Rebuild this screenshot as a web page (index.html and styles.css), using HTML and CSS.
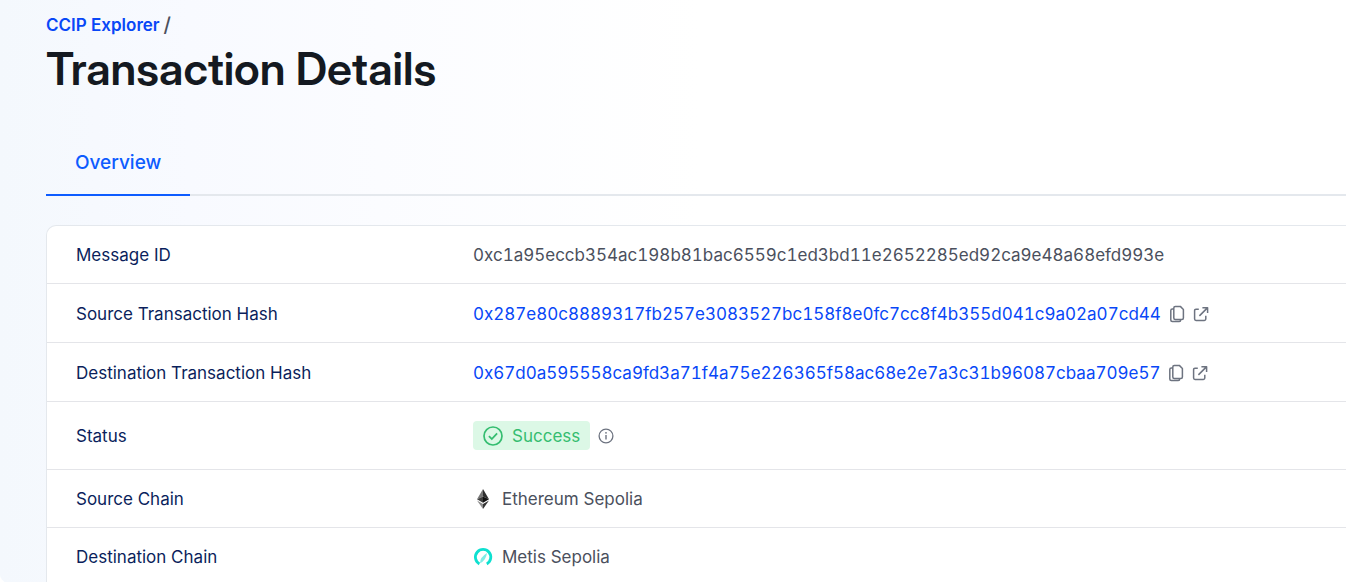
FILE: index.html
```
<!DOCTYPE html>
<html lang="en">
<head>
<meta charset="utf-8">
<meta name="viewport" content="width=device-width, initial-scale=1">
<title>Transaction Details</title>
<link rel="stylesheet" href="styles.css">
</head>
<body>
<svg class="sprite" aria-hidden="true">
  <symbol id="copy" viewBox="0 0 16 18">
    <path d="M4.8 2.9Q4.8 1.4 6.3 1.4H11.3L14.4 4.5V13.1Q14.4 14.6 12.9 14.6H6.3Q4.8 14.6 4.8 13.1Z M4.6 3.9H3.3Q1.8 3.9 1.8 5.4V15.1Q1.8 16.6 3.3 16.6H10.2Q11.7 16.6 11.7 14.8" fill="none" stroke="currentColor" stroke-width="1.5" stroke-linejoin="round"/>
  </symbol>
  <symbol id="open" viewBox="0 0 16 16">
    <path d="M5.8 3.2H3Q1.6 3.2 1.6 4.6V13Q1.6 14.4 3 14.4H11.4Q12.8 14.4 12.8 13V9.8 M9.4 1.7H14.6V6.9 M14.4 1.9L6.4 9.9" fill="none" stroke="currentColor" stroke-width="1.5" stroke-linejoin="round"/>
  </symbol>
</svg>
<main class="page">
  <nav class="breadcrumb" aria-label="Breadcrumb"><a class="breadcrumb-link" href="#">CCIP Explorer</a><span class="breadcrumb-separator">/</span></nav>
  <h1 class="title">Transaction Details</h1>
  <div class="tabs" role="tablist">
    <button class="tab" type="button" role="tab" aria-selected="true">Overview</button>
  </div>
  <div class="card">
    <table class="details">
      <tbody>
        <tr><th scope="row">Message ID</th><td><span class="hash">0xc1a95eccb354ac198b81bac6559c1ed3bd11e2652285ed92ca9e48a68efd993e</span></td></tr>
        <tr><th scope="row">Source Transaction Hash</th><td><div class="value hash-value"><a class="hash" href="#">0x287e80c8889317fb257e3083527bc158f8e0fc7cc8f4b355d041c9a02a07cd44</a><span class="actions"><button class="icon-button" type="button" aria-label="Copy source hash"><svg class="copy-icon"><use href="#copy"/></svg></button><a class="icon-button" href="#" aria-label="Open source transaction"><svg class="open-icon"><use href="#open"/></svg></a></span></div></td></tr>
        <tr><th scope="row">Destination Transaction Hash</th><td><div class="value hash-value"><a class="hash" href="#">0x67d0a595558ca9fd3a71f4a75e226365f58ac68e2e7a3c31b96087cbaa709e57</a><span class="actions"><button class="icon-button" type="button" aria-label="Copy destination hash"><svg class="copy-icon"><use href="#copy"/></svg></button><a class="icon-button" href="#" aria-label="Open destination transaction"><svg class="open-icon"><use href="#open"/></svg></a></span></div></td></tr>
        <tr><th scope="row">Status</th><td><div class="value status-value"><span class="badge"><svg class="check-icon" viewBox="0 0 20 20" aria-hidden="true"><circle cx="10" cy="10" r="9" fill="none" stroke="currentColor" stroke-width="1.7"/><path d="M5.9 10.2L8.8 13L14.1 7.3" fill="none" stroke="currentColor" stroke-width="1.8"/></svg>Success</span><button class="icon-button" type="button" aria-label="Status information"><svg class="info-icon" viewBox="0 0 16 16"><circle cx="8" cy="8" r="6.9" fill="none" stroke="currentColor" stroke-width="1.3"/><path d="M8 7V11.6" stroke="currentColor" stroke-width="1.4"/><circle cx="8" cy="4.8" r=".9" fill="currentColor"/></svg></button></div></td></tr>
        <tr><th scope="row">Source Chain</th><td><div class="value chain"><svg class="chain-icon" viewBox="0 0 20 20" aria-hidden="true"><path d="M10 0L4 10.2L10 7.5Z" fill="#777"/><path d="M10 0L16 10.2L10 7.5Z" fill="#2e2e2e"/><path d="M4 10.2L10 7.5V13.8Z" fill="#3c3c3b"/><path d="M16 10.2L10 7.5V13.8Z" fill="#111"/><path d="M4 11.5L10 15V20Z" fill="#8c8c8c"/><path d="M16 11.5L10 15V20Z" fill="#343434"/></svg>Ethereum Sepolia</div></td></tr>
        <tr><th scope="row">Destination Chain</th><td><div class="value chain"><svg class="chain-icon" viewBox="0 0 20 20" aria-hidden="true"><path d="M6.4 16.9A7.7 7.7 0 1 1 13.8 16.9" fill="none" stroke="#0ee0d0" stroke-width="2.8"/><path d="M7 16.2Q6.6 10.6 14 6Q13 13.6 7 16.2Z" fill="#80ede5"/></svg>Metis Sepolia</div></td></tr>
      </tbody>
    </table>
  </div>
</main>
</body>
</html>
```
FILE: styles.css
```
* { box-sizing: border-box; }
html { background: #fff; }
body {
  margin: 0;
  min-height: 100vh;
  font-family: Inter, "Liberation Sans", sans-serif;
  font-size: 17px;
  line-height: 24px;
  color: #4b505d;
  background: linear-gradient(90deg, #f4f8fd 0, #f8faff 190px, #fbfcff 380px, #fff 700px);
  border-bottom-left-radius: 24px 12px;
}
a { color: #0847f7; text-decoration: none; }
.sprite { position: absolute; width: 0; height: 0; }
.page { padding: 13px 0 0 46px; }
.breadcrumb { display: flex; align-items: center; gap: 4px; }
.breadcrumb-link { font-weight: 600; }
.breadcrumb-separator { font-size: 20px; font-weight: 500; }
.title {
  margin: 3px 0 0;
  font-family: "Inter Display", Inter, sans-serif;
  font-size: 45px;
  line-height: 58px;
  font-weight: 600;
  color: #141921;
}
.tabs { display: flex; margin-top: 31px; box-shadow: inset 0 -2px #e4e8ed; }
.tab {
  padding: 21px 29px 19px;
  border: 0;
  border-bottom: 2px solid #0d5cff;
  background: none;
  color: #0d5cff;
  font: 500 19px/25px Inter, sans-serif;
}
.card {
  margin-top: 29px;
  border: 1px solid #e4e8ed;
  border-right: 0;
  border-radius: 10px 0 0 0;
  background: #fff;
  overflow: hidden;
}
.details { width: 100%; border-collapse: collapse; }
.details th, .details td { padding: 17px 0 16px; border-bottom: 1px solid #e4e5e9; text-align: left; }
.details th { width: 426px; padding-left: 29px; font-weight: 400; color: #0b1f5c; }
.details td { white-space: nowrap; }
.value { display: flex; align-items: center; }
.hash-value { min-height: 25px; }
.hash { font-feature-settings: "tnum"; }
.actions { display: flex; gap: 8px; margin-left: 8px; }
.icon-button { display: flex; align-items: center; padding: 0; border: 0; background: none; color: #6d7380; }
.copy-icon { width: 16px; height: 18px; }
.open-icon, .info-icon { width: 16px; height: 16px; }
.status-value { gap: 8px; }
.badge {
  display: flex;
  align-items: center;
  gap: 9px;
  margin: 2px 0 3px;
  padding: 3px 10px 2px;
  border-radius: 4px;
  background: #dcf8e6;
  color: #35bd70;
}
.check-icon { width: 20px; height: 20px; }
.chain { gap: 9px; }
.chain-icon { width: 20px; height: 20px; }
```
